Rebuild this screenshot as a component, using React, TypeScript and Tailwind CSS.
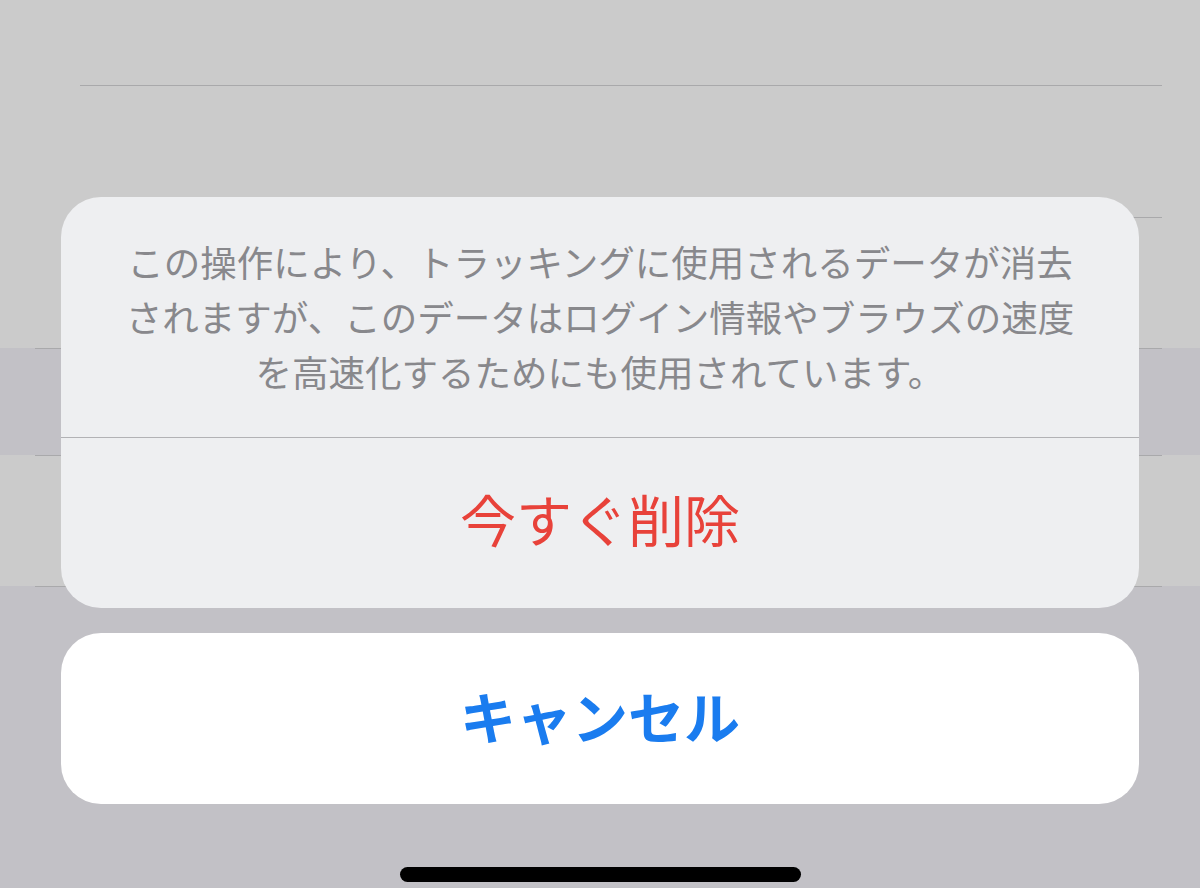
const font = { fontFamily: '"Noto Sans CJK JP", "Noto Sans", sans-serif' };

const Row = ({ tall, dark, inset }: { tall: string; dark?: boolean; inset: string }) => (
  <div className={`${tall} ${dark ? "bg-[#c2c1c6]" : "bg-[#cbcbcb]"}`}>
    <div className={`h-px bg-[#a9a9ab] ${inset} mr-[38px]`} />
  </div>
);

const App = () => {
  return (
    <div className="relative h-[888px] w-[1200px] overflow-hidden bg-[#cbcbcb]" style={font}>
      {/* list underneath the sheet */}
      <div className="flex flex-col">
        <div className="h-[85px] bg-[#cbcbcb]" />
        <Row tall="h-[132px]" inset="ml-[80px]" />
        <Row tall="h-[131px]" inset="ml-[80px]" />
        <Row tall="h-[107px]" dark inset="ml-[35px]" />
        <Row tall="h-[131px]" inset="ml-[35px]" />
        <Row tall="h-[302px]" dark inset="ml-[35px]" />
      </div>

      {/* action sheet */}
      <div className="absolute inset-0 flex flex-col items-center px-[61px] pt-[197px]">
        <div className="flex w-full flex-col overflow-hidden rounded-[40px] bg-[#eeeff1]">
          <div className="flex h-[240px] items-center justify-center pb-[2px]">
            <p className="text-center text-[36.5px] leading-[55px] text-[#88888c]">
              この操作により、トラッキングに使用されるデータが消去
              <br />
              されますが、このデータはログイン情報やブラウズの速度
              <br />
              を高速化するためにも使用されています。
            </p>
          </div>
          <div className="h-px bg-[#b2b2b5]" />
          <button className="flex h-[170px] items-center justify-center pb-[10px] text-[56px] text-[#e8423a]">
            今すぐ削除
          </button>
        </div>
        <button className="mt-[25px] flex h-[171px] w-full items-center justify-center rounded-[40px] bg-white pb-[8px] text-[56px] font-bold text-[#1a7cef]">
          キャンセル
        </button>
        <div className="mt-[63px] h-[15px] w-[401px] rounded-full bg-black" />
      </div>
    </div>
  );
};

export default App;
